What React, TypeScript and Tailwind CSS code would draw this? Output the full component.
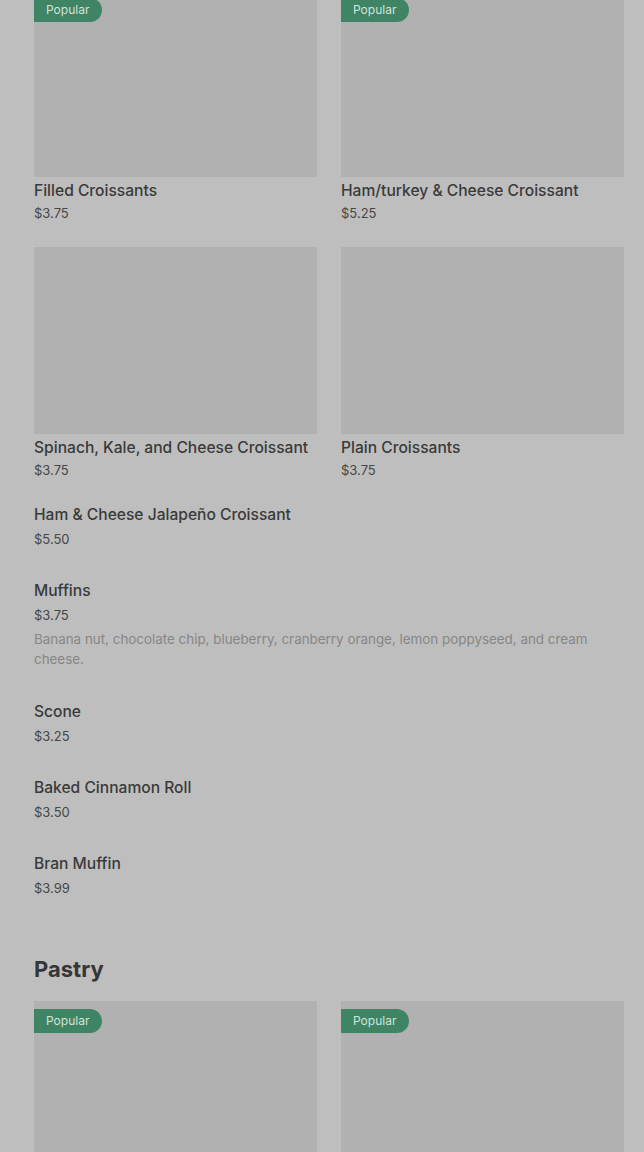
import React from 'react';

type Item = { name: string; price: string; desc?: string; popular?: boolean };

const topCards: Item[] = [
  { name: 'Filled Croissants', price: '$3.75', popular: true },
  { name: 'Ham/turkey & Cheese Croissant', price: '$5.25', popular: true },
  { name: 'Spinach, Kale, and Cheese Croissant', price: '$3.75' },
  { name: 'Plain Croissants', price: '$3.75' },
];

const listItems: Item[] = [
  { name: 'Ham & Cheese Jalapeño Croissant', price: '$5.50' },
  {
    name: 'Muffins',
    price: '$3.75',
    desc: 'Banana nut, chocolate chip, blueberry, cranberry orange, lemon poppyseed, and cream cheese.',
  },
  { name: 'Scone', price: '$3.25' },
  { name: 'Baked Cinnamon Roll', price: '$3.50' },
  { name: 'Bran Muffin', price: '$3.99' },
];

function Photo({ popular }: { popular?: boolean }) {
  return (
    <div className="relative h-[187px] bg-[#b1b1b1]">
      {popular && (
        <span className="absolute left-0 top-[8px] flex h-[24px] items-center rounded-r-full bg-[#3f8464] pl-[12px] pr-[13px] text-[12px] text-[#d3e3da]">
          Popular
        </span>
      )}
    </div>
  );
}

function Card({ item }: { item: Item }) {
  return (
    <div>
      <Photo popular={item.popular} />
      <p className="mt-[4px] text-[15.6px] leading-[20px] font-medium text-[#3a3a3a]">{item.name}</p>
      <p className="mt-[3px] text-[13px] leading-[18px] text-[#474747]">{item.price}</p>
    </div>
  );
}

export default function App() {
  return (
    <div className="min-h-screen overflow-hidden bg-[#bebebe] font-['Inter',sans-serif]">
      <div className="-mt-[10px] pl-[34px] pr-[20px] pb-10">
        {/* Croissant cards */}
        <div className="grid grid-cols-2 gap-x-[24px] gap-y-[25px]">
          {topCards.map((c) => (
            <Card key={c.name} item={c} />
          ))}
        </div>

        {/* Plain list items */}
        <div className="mt-[26px] flex flex-col gap-[33px]">
          {listItems.map((it) => (
            <div key={it.name}>
              <p className="text-[15.6px] leading-[20px] font-medium text-[#3a3a3a]">{it.name}</p>
              <p className="mt-[5px] text-[13px] leading-[18px] text-[#474747]">{it.price}</p>
              {it.desc && (
                <p className="mt-[5px] text-[13.4px] leading-[20px] text-[#868686]">{it.desc}</p>
              )}
            </div>
          ))}
        </div>

        {/* Pastry section */}
        <h2 className="mt-[58px] text-[22px] leading-[28px] font-bold text-[#363636]">Pastry</h2>
        <div className="mt-[18px] grid grid-cols-2 gap-x-[24px]">
          <Photo popular />
          <Photo popular />
        </div>
      </div>
    </div>
  );
}
